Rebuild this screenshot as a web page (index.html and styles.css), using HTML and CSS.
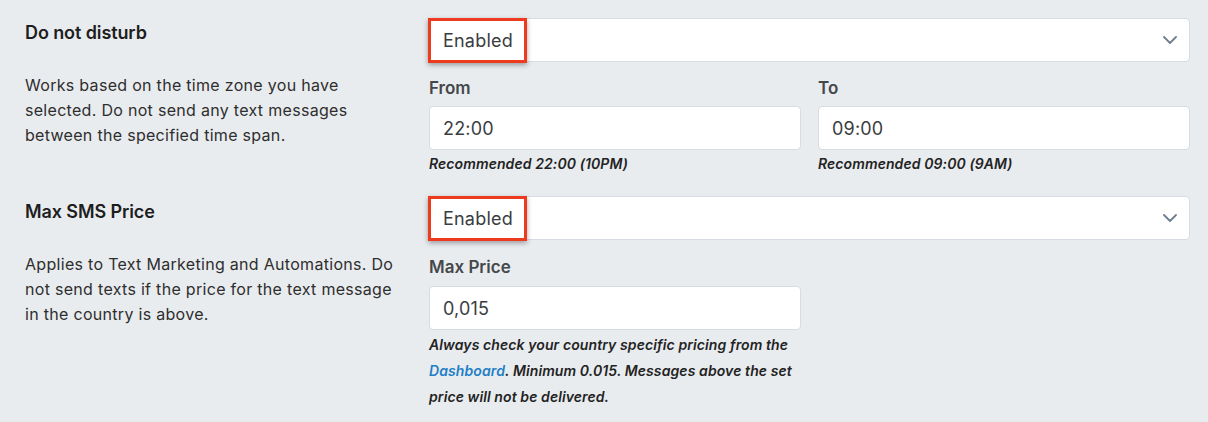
FILE: index.html
```html
<!DOCTYPE html>
<html lang="en">
<head>
<meta charset="utf-8">
<link rel="stylesheet" href="styles.css">
</head>
<body>
<div class="page">
  <section class="setting">
    <div class="info">
      <h3 class="title">Do not disturb</h3>
      <p class="desc">Works based on the time zone you have selected. Do not send any text messages between the specified time span.</p>
    </div>
    <div class="fields">
      <div class="select-wrap">
        <div class="select">
          <span>Enabled</span>
          <svg class="chevron" width="14" height="8" viewBox="0 0 14 8"><path d="M1 1l6 6 6-6" fill="none" stroke="#6f7f8f" stroke-width="1.8" stroke-linecap="round" stroke-linejoin="round"/></svg>
        </div>
        <div class="highlight"></div>
      </div>
      <div class="row">
        <div class="field">
          <label class="label">From</label>
          <div class="input">22:00</div>
          <div class="help">Recommended 22:00 (10PM)</div>
        </div>
        <div class="field">
          <label class="label">To</label>
          <div class="input">09:00</div>
          <div class="help">Recommended 09:00 (9AM)</div>
        </div>
      </div>
    </div>
  </section>
  <section class="setting second">
    <div class="info">
      <h3 class="title">Max SMS Price</h3>
      <p class="desc">Applies to Text Marketing and Automations. Do not send texts if the price for the text message in the country is above.</p>
    </div>
    <div class="fields">
      <div class="select-wrap">
        <div class="select">
          <span>Enabled</span>
          <svg class="chevron" width="14" height="8" viewBox="0 0 14 8"><path d="M1 1l6 6 6-6" fill="none" stroke="#6f7f8f" stroke-width="1.8" stroke-linecap="round" stroke-linejoin="round"/></svg>
        </div>
        <div class="highlight"></div>
      </div>
      <div class="row row-price">
        <div class="field">
          <label class="label">Max Price</label>
          <div class="input">0,015</div>
          <p class="help help-block">Always check your country specific pricing from the <a href="#">Dashboard</a>. Minimum 0.015. Messages above the set price will not be delivered.</p>
        </div>
      </div>
    </div>
  </section>
</div>
</body>
</html>
```

FILE: styles.css
```css
* { box-sizing: border-box; }
html, body {
  margin: 0;
  padding: 0;
  background: #e9ecef;
  font-family: Inter, "Noto Sans", "Liberation Sans", sans-serif;
  color: #2b2b2b;
}
.page {
  padding: 18px 18px 0 25px;
}
.setting {
  display: grid;
  grid-template-columns: 380px 761px;
  column-gap: 24px;
}
.second {
  margin-top: 19px;
}
.title {
  margin: 0;
  padding-top: 3px;
  font-size: 18px;
  line-height: 24px;
  font-weight: 600;
  color: #1e1e1e;
  letter-spacing: -0.1px;
}
.second .title {
  padding-top: 4px;
}
.desc {
  margin: 28px 0 0;
  font-size: 16px;
  line-height: 25px;
  color: #2e2e2e;
  letter-spacing: 0.3px;
}
.select-wrap {
  position: relative;
}
.select {
  height: 44px;
  background: #fff;
  border: 1px solid #d6dce2;
  border-radius: 4px;
  display: flex;
  align-items: center;
  justify-content: space-between;
  padding: 0 12px 0 13px;
  font-size: 18px;
  letter-spacing: 0.2px;
  color: #3a3d40;
}
.highlight {
  position: absolute;
  left: -1px;
  top: 0;
  width: 99px;
  height: 45px;
  border: 3px solid #ee3a1f;
  box-shadow: 0 2px 5px rgba(0,0,0,0.35);
}
.row {
  display: flex;
  gap: 17px;
  margin-top: 14px;
}
.row-price {
  margin-top: 15px;
}
.row-price .input {
  margin-top: 7px;
}
.field {
  width: 372px;
}
.label {
  display: block;
  font-size: 17px;
  line-height: 24px;
  font-weight: 600;
  color: #45484b;
}
.input {
  margin-top: 6px;
  height: 44px;
  background: #fff;
  border: 1px solid #d6dce2;
  border-radius: 4px;
  display: flex;
  align-items: center;
  padding-left: 13px;
  font-size: 18px;
  letter-spacing: 0.2px;
  color: #3a3d40;
}
.help {
  margin: 1px 0 0;
  font-size: 14px;
  line-height: 26px;
  font-style: italic;
  font-weight: 600;
  color: #232323;
  letter-spacing: 0.1px;
}
.help-block {
  margin-top: 2px;
}
.help a {
  color: #1f7fc6;
  text-decoration: none;
}
```
